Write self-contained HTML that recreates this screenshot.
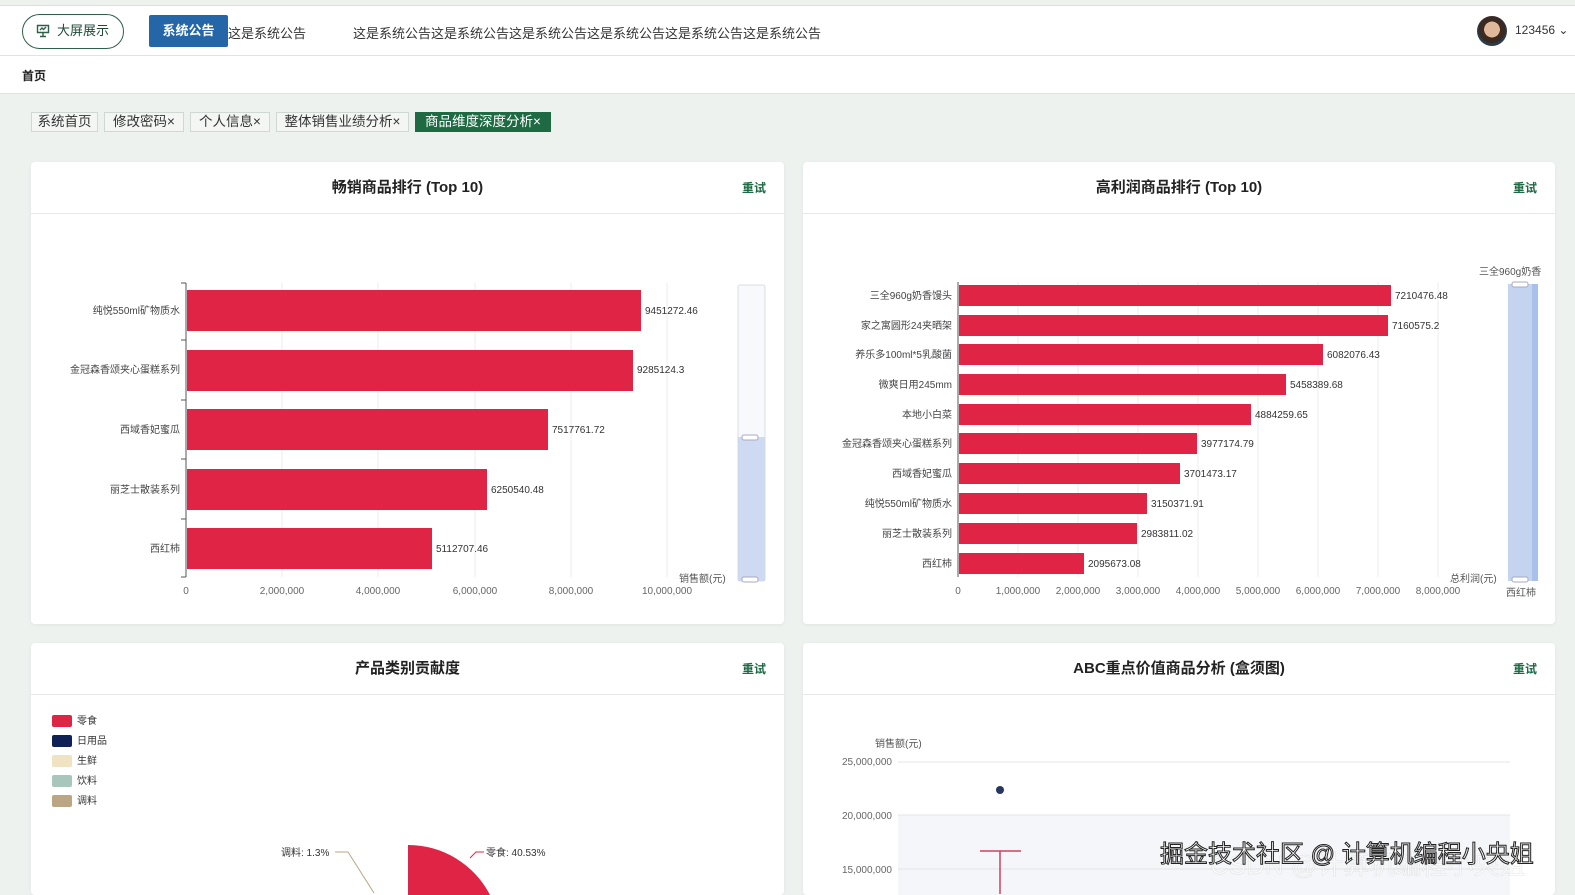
<!DOCTYPE html>
<html><head><meta charset="utf-8">
<style>
*{margin:0;padding:0;box-sizing:border-box}
html,body{width:1575px;height:895px;overflow:hidden}
body{background:#eef2ef;font-family:"Liberation Sans","Noto Sans CJK SC",sans-serif;position:relative;color:#333}
.abs{position:absolute}
.top{left:0;width:1575px;background:#fff;border-top:1px solid #ddd;border-bottom:1px solid #e2e2e2;top:5px;height:51px}
.crumb{left:0;top:56px;width:1575px;height:38px;background:#fff;border-bottom:1px solid #e0e4e0}
.btn{left:22px;top:14px;width:102px;height:35px;border:1.5px solid #2f5f48;border-radius:18px;font-size:13px;color:#1f4a36;line-height:32px;padding-left:34px}
.tag{top:112px;height:20px;border:1px solid #cfd8d2;background:#f4f6f4;font-size:13.5px;line-height:18px;text-align:center;color:#333;white-space:nowrap;overflow:hidden}
.card{background:#fff;border-radius:4px;box-shadow:0 1px 4px rgba(0,0,0,.06);overflow:hidden}
.hd{position:absolute;left:0;right:0;top:0;height:52px;border-bottom:1px solid #e8e8e8;text-align:center;line-height:52px;font-size:15px;font-weight:bold;color:#222}
.retry{position:absolute;right:18px;top:17px;font-size:12px;color:#1e6a45;font-weight:bold}
svg text{font-family:"Liberation Sans","Noto Sans CJK SC",sans-serif}
</style></head><body>
<div class="abs top"></div>
<div class="abs btn"><svg class="abs" style="left:13px;top:9px" width="14" height="14" viewBox="0 0 14 14"><path d="M1.5 1.5h11v7h-11z M4 12.5h6 M7 8.5v4 M4 6l2-2 1.5 1.5L10 3" fill="none" stroke="#2f5f48" stroke-width="1.4"/></svg>大屏展示</div>
<div class="abs" style="left:150px;top:23px;font-size:13px;color:#333">这是系统公告这是系统公告</div>
<div class="abs" style="left:149px;top:15px;width:79px;height:32px;background:#2466a8;border-radius:2px;color:#fff;font-size:13px;line-height:32px;text-align:center;font-weight:bold">系统公告</div>
<div class="abs" style="left:353px;top:23px;font-size:13px;color:#333">这是系统公告这是系统公告这是系统公告这是系统公告这是系统公告这是系统公告</div>
<div class="abs" style="left:1477px;top:16px;width:30px;height:30px;border-radius:50%;background:radial-gradient(circle at 50% 45%,#e0b89a 0 35%,#3a2a22 36% 60%,#2a3b4a 61%)"></div>
<div class="abs" style="left:1515px;top:23px;font-size:12px;color:#333">123456 ⌄</div>
<div class="abs crumb"><span class="abs" style="left:22px;top:11px;font-size:12px;font-weight:bold;color:#222">首页</span></div>

<div class="abs tag" style="left:31px;width:67px">系统首页</div>
<div class="abs tag" style="left:104px;width:80px">修改密码×</div>
<div class="abs tag" style="left:190px;width:80px">个人信息×</div>
<div class="abs tag" style="left:276px;width:133px">整体销售业绩分析×</div>
<div class="abs tag" style="left:415px;width:136px;background:#1d6a43;border-color:#1d6a43;color:#fff">商品维度深度分析×</div>

<div class="abs card" style="left:31px;top:162px;width:753px;height:462px"><div class="hd">畅销商品排行 (Top 10)</div><div class="retry">重试</div></div>
<div class="abs card" style="left:803px;top:162px;width:752px;height:462px"><div class="hd">高利润商品排行 (Top 10)</div><div class="retry">重试</div></div>
<div class="abs card" style="left:31px;top:643px;width:753px;height:252px"><div class="hd">产品类别贡献度</div><div class="retry">重试</div></div>
<div class="abs card" style="left:803px;top:643px;width:752px;height:252px"><div class="hd">ABC重点价值商品分析 (盒须图)</div><div class="retry">重试</div></div>

<svg class="abs" style="left:0;top:0" width="1575" height="895">
<g stroke="#eee" stroke-width="1">
<line x1="282" y1="283" x2="282" y2="577"/><line x1="378" y1="283" x2="378" y2="577"/><line x1="475" y1="283" x2="475" y2="577"/><line x1="571" y1="283" x2="571" y2="577"/><line x1="667" y1="283" x2="667" y2="577"/>
</g>
<line x1="186" y1="283" x2="186" y2="577" stroke="#555"/>
<g stroke="#555"><line x1="181" y1="283" x2="186" y2="283"/><line x1="181" y1="340" x2="186" y2="340"/><line x1="181" y1="400" x2="186" y2="400"/><line x1="181" y1="459" x2="186" y2="459"/><line x1="181" y1="519" x2="186" y2="519"/><line x1="181" y1="577" x2="186" y2="577"/></g>
<g fill="#e02446">
<rect x="187" y="290" width="454" height="41"/><rect x="187" y="350" width="446" height="41"/><rect x="187" y="409" width="361" height="41"/><rect x="187" y="469" width="300" height="41"/><rect x="187" y="528" width="245" height="41"/>
</g>
<g font-size="10" fill="#444" text-anchor="end">
<text x="180" y="314">纯悦550ml矿物质水</text><text x="180" y="373">金冠森香颂夹心蛋糕系列</text><text x="180" y="433">西域香妃蜜瓜</text><text x="180" y="493">丽芝士散装系列</text><text x="180" y="552">西红柿</text>
</g>
<g font-size="10" fill="#333">
<text x="645" y="314">9451272.46</text><text x="637" y="373">9285124.3</text><text x="552" y="433">7517761.72</text><text x="491" y="493">6250540.48</text><text x="436" y="552">5112707.46</text>
</g>
<g font-size="10" fill="#666" text-anchor="middle">
<text x="186" y="594">0</text><text x="282" y="594">2,000,000</text><text x="378" y="594">4,000,000</text><text x="475" y="594">6,000,000</text><text x="571" y="594">8,000,000</text><text x="667" y="594">10,000,000</text>
</g>
<text x="679" y="582" font-size="10" fill="#555">销售额(元)</text>
<rect x="738" y="285" width="27" height="296" rx="2" fill="#f7f9fc" stroke="#d8dde8"/>
<rect x="738" y="437" width="27" height="144" fill="#c9d6f0" opacity=".9"/>
<rect x="742" y="435" width="16" height="5" rx="2" fill="#fff" stroke="#aab"/>
<rect x="742" y="577" width="16" height="5" rx="2" fill="#fff" stroke="#aab"/>

<g stroke="#eee"><line x1="1018" y1="282" x2="1018" y2="577"/><line x1="1078" y1="282" x2="1078" y2="577"/><line x1="1138" y1="282" x2="1138" y2="577"/><line x1="1198" y1="282" x2="1198" y2="577"/><line x1="1258" y1="282" x2="1258" y2="577"/><line x1="1318" y1="282" x2="1318" y2="577"/><line x1="1378" y1="282" x2="1378" y2="577"/><line x1="1438" y1="282" x2="1438" y2="577"/></g>
<line x1="958" y1="282" x2="958" y2="577" stroke="#555"/>
<g fill="#e02446">
<rect x="959" y="285" width="432" height="21"/><rect x="959" y="315" width="429" height="21"/><rect x="959" y="344" width="364" height="21"/><rect x="959" y="374" width="327" height="21"/><rect x="959" y="404" width="292" height="21"/><rect x="959" y="433" width="238" height="21"/><rect x="959" y="463" width="221" height="21"/><rect x="959" y="493" width="188" height="21"/><rect x="959" y="523" width="178" height="21"/><rect x="959" y="553" width="125" height="21"/>
</g>
<g font-size="10" fill="#444" text-anchor="end">
<text x="952" y="299">三全960g奶香馒头</text><text x="952" y="329">家之寓圆形24夹晒架</text><text x="952" y="358">养乐多100ml*5乳酸菌</text><text x="952" y="388">微爽日用245mm</text><text x="952" y="418">本地小白菜</text><text x="952" y="447">金冠森香颂夹心蛋糕系列</text><text x="952" y="477">西域香妃蜜瓜</text><text x="952" y="507">纯悦550ml矿物质水</text><text x="952" y="537">丽芝士散装系列</text><text x="952" y="567">西红柿</text>
</g>
<g font-size="10" fill="#333">
<text x="1395" y="299">7210476.48</text><text x="1392" y="329">7160575.2</text><text x="1327" y="358">6082076.43</text><text x="1290" y="388">5458389.68</text><text x="1255" y="418">4884259.65</text><text x="1201" y="447">3977174.79</text><text x="1184" y="477">3701473.17</text><text x="1151" y="507">3150371.91</text><text x="1141" y="537">2983811.02</text><text x="1088" y="567">2095673.08</text>
</g>
<g font-size="10" fill="#666" text-anchor="middle">
<text x="958" y="594">0</text><text x="1018" y="594">1,000,000</text><text x="1078" y="594">2,000,000</text><text x="1138" y="594">3,000,000</text><text x="1198" y="594">4,000,000</text><text x="1258" y="594">5,000,000</text><text x="1318" y="594">6,000,000</text><text x="1378" y="594">7,000,000</text><text x="1438" y="594">8,000,000</text>
</g>
<text x="1450" y="582" font-size="10" fill="#555">总利润(元)</text>
<text x="1479" y="275" font-size="10" fill="#555">三全960g奶香</text>
<text x="1506" y="596" font-size="10" fill="#555">西红柿</text>
<rect x="1508" y="284" width="30" height="297" fill="#c3d3f0"/>
<rect x="1532" y="284" width="6" height="297" fill="#a9c0ea"/>
<rect x="1512" y="282" width="16" height="5" rx="2" fill="#fff" stroke="#aab"/>
<rect x="1512" y="577" width="16" height="5" rx="2" fill="#fff" stroke="#aab"/>

<g font-size="10" fill="#333">
<rect x="52" y="715" width="20" height="12" rx="2" fill="#e02446"/><text x="77" y="724">零食</text>
<rect x="52" y="735" width="20" height="12" rx="2" fill="#0f2155"/><text x="77" y="744">日用品</text>
<rect x="52" y="755" width="20" height="12" rx="2" fill="#efe3c2"/><text x="77" y="764">生鲜</text>
<rect x="52" y="775" width="20" height="12" rx="2" fill="#a9c6bc"/><text x="77" y="784">饮料</text>
<rect x="52" y="795" width="20" height="12" rx="2" fill="#bba684"/><text x="77" y="804">调料</text>
</g>
<path d="M408 895 L408 845 A92 92 0 0 1 490 895 Z" fill="#e02446"/>
<polyline points="470,858 476,852 484,852" fill="none" stroke="#e02446"/>
<text x="486" y="856" font-size="10" fill="#333">零食: 40.53%</text>
<polyline points="374,893 348,852 335,852" fill="none" stroke="#bba684"/>
<text x="281" y="856" font-size="10" fill="#333">调料: 1.3%</text>

<rect x="898" y="815" width="612" height="80" fill="#f4f6f9"/>
<g stroke="#e4e4e4"><line x1="898" y1="762" x2="1510" y2="762"/><line x1="898" y1="815" x2="1510" y2="815"/><line x1="898" y1="869" x2="1510" y2="869"/></g>
<g font-size="10" fill="#666" text-anchor="end"><text x="892" y="765">25,000,000</text><text x="892" y="819">20,000,000</text><text x="892" y="873">15,000,000</text></g>
<text x="875" y="747" font-size="10" fill="#555">销售额(元)</text>
<circle cx="1000" cy="790" r="4" fill="#26365e"/>
<line x1="980" y1="851" x2="1021" y2="851" stroke="#d04060" stroke-width="1.5"/>
<line x1="1000" y1="851" x2="1000" y2="894" stroke="#d04060" stroke-width="1.5"/>
<text x="1210" y="874" font-size="26" fill="#fff" opacity=".5" stroke="#ccc" stroke-width=".5">CSDN @计算机编程小央姐</text>
<text x="1160" y="862" font-size="24" fill="#fff" stroke="#222" stroke-width="1">掘金技术社区 @ 计算机编程小央姐</text>
</svg>
</body></html>
